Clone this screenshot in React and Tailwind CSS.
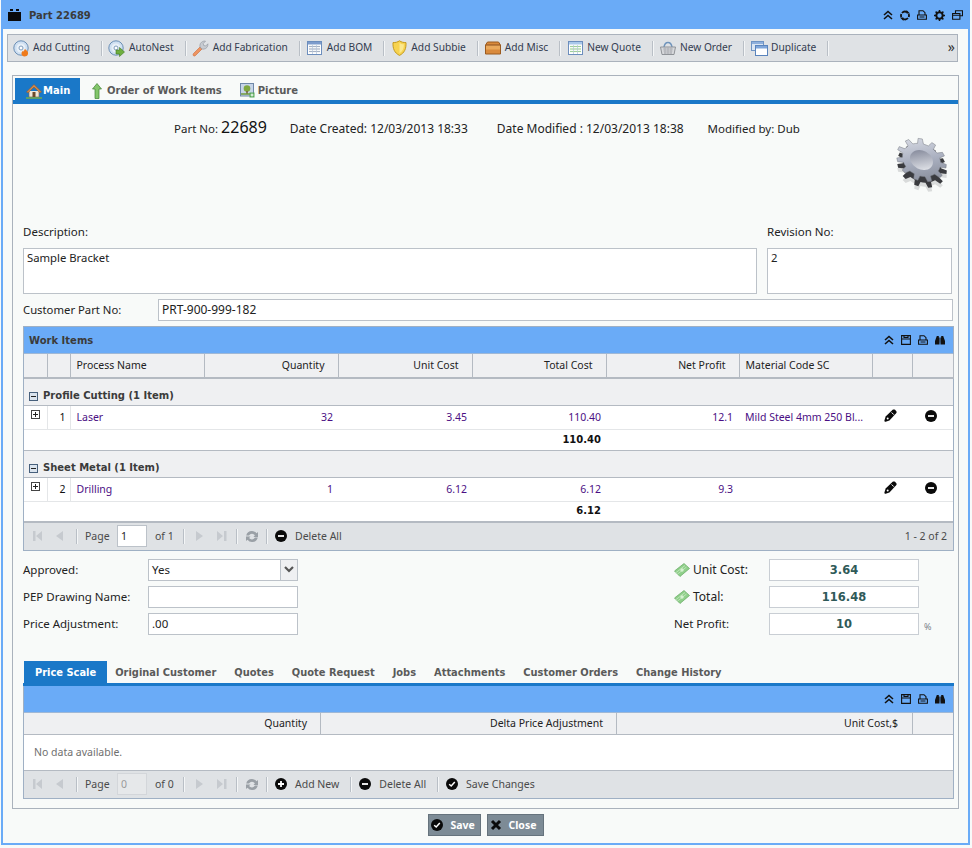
import { Fragment } from 'react'

// small toolbar pictures
const DiscIcon = ({ badge }) => (
  <svg width="17" height="17" viewBox="0 0 17 17" className="shrink-0">
    <circle cx="8" cy="8" r="7.2" fill="#cfe0f2" stroke="#6b8fb5" />
    <circle cx="8" cy="8" r="4.5" fill="#e8f0f8" />
    <circle cx="8" cy="8" r="2" fill="#fff" stroke="#7f9cbc" />
    {badge === 'fire' && <path d="M12 9c2 1.500 3.500 3 3 5-.5 1.800-2 2.500-3.500 2.500S8.500 15.500 8.500 13.500c0-1.500 1-2 1.500-3 .5.500.7 1 1 1.300 0-1 .2-2 1-2.800z" fill="#ef7a1a" />}
    {badge === 'arrow' && <path d="M8 10h3.500V7.500L16.500 12l-5 4.500V14H8z" fill="#6fae3e" stroke="#3f7a22" strokeWidth=".6" />}
  </svg>
)

const WrenchIcon = () => (
  <svg width="17" height="17" viewBox="0 0 17 17" className="shrink-0">
    <path d="M1.500 13.500 8 7l2 2-6.500 6.500c-.7.700-1.500.700-2 .2s-.6-1.400 0-2.200z" fill="#ee9460" stroke="#c9693a" strokeWidth=".6" />
    <path d="M8 7c-.6-2.500.6-5 3.500-5.800.8-.2 1.500-.2 2 0L11.200 3.500l.5 2 2 .5 2.200-2.200c.3 2.800-1.500 5-4 5.300-1 .1-1.500 0-2-.1z" fill="#c8ccd2" stroke="#8a9099" strokeWidth=".6" />
  </svg>
)

const TableIcon = ({ tint }) => (
  <svg width="15" height="14" viewBox="0 0 15 14" className="shrink-0">
    <rect x=".5" y=".5" width="14" height="13" fill="#fff" stroke="#6c8ebd" />
    <rect x="1" y="1" width="13" height="2.500" fill={tint ? '#a9c8ea' : '#7d9ccc'} />
    {[5.500, 8, 10.500].map((y) => <path key={y} d={`M2 ${y}h11`} stroke={tint ? '#9fcf9a' : '#a7b2c4'} strokeWidth="1.200" />)}
    <path d="M5.500 4v9M9.500 4v9" stroke="#b5c4da" strokeWidth=".7" />
  </svg>
)

const ShieldIcon = () => (
  <svg width="15" height="16" viewBox="0 0 15 16" className="shrink-0">
    <path d="M7.500.8C9.500 2.200 11.500 2.600 14 2.600c.3 6-1.500 10.400-6.500 12.800C2.500 13 .7 8.600 1 2.600 3.500 2.600 5.500 2.200 7.500.8z" fill="#f7d34f" stroke="#c49a1e" />
    <path d="M7.500 3c1.300.8 2.600 1.200 4.400 1.300 0 4-1 7-4.400 8.900z" fill="#fbe88f" />
  </svg>
)

const BoxIcon = () => (
  <svg width="16" height="14" viewBox="0 0 16 14" className="shrink-0">
    <path d="M2.500 1h11L15.500 4v9h-15V4z" fill="#d98a3c" stroke="#9a5a1e" />
    <rect x="1" y="4" width="14" height="4.500" fill="#eaa95c" />
    <path d="M1 4h14" stroke="#8a5120" />
  </svg>
)

const BasketIcon = () => (
  <svg width="16" height="14" viewBox="0 0 16 14" className="shrink-0">
    <path d="M4 6c.5-3 2-4.500 4-4.500S11.500 3 12 6" fill="none" stroke="#6e93bb" strokeWidth="1.500" />
    <path d="M.5 6h15l-1.500 7.500H2z" fill="#d7d9dc" stroke="#8f9398" />
    <path d="M3 8h10M3.500 10h9M4 12h8M5 6.500v6.500M8 6.500v6.500M11 6.500v6.500" stroke="#9ca0a5" strokeWidth=".6" />
  </svg>
)

const DuplicateIcon = () => (
  <svg width="17" height="15" viewBox="0 0 17 15" className="shrink-0">
    <rect x=".5" y=".5" width="12" height="9" fill="#dbe6f3" stroke="#6f94c4" />
    <rect x="1" y="1" width="11" height="2" fill="#8fb0dc" />
    <rect x="4.500" y="4.500" width="12" height="10" fill="#fff" stroke="#5a84bd" />
    <rect x="5" y="5" width="11" height="2.500" fill="#7fa6da" />
  </svg>
)

const tools = [
  ['Add Cutting', <DiscIcon badge="fire" />],
  ['AutoNest', <DiscIcon badge="arrow" />],
  ['Add Fabrication', <WrenchIcon />],
  ['Add BOM', <TableIcon />],
  ['Add Subbie', <ShieldIcon />],
  ['Add Misc', <BoxIcon />],
  ['New Quote', <TableIcon tint />],
  ['New Order', <BasketIcon />],
  ['Duplicate', <DuplicateIcon />],
]

// black header glyphs
const ChevronsUp = () => (
  <svg width="10" height="10" viewBox="0 0 10 10"><path d="M1 5l4-3.500L9 5M1 9l4-3.500L9 9" fill="none" stroke="#111" strokeWidth="1.600" /></svg>
)
const RefreshGlyph = () => (
  <svg width="10" height="11" viewBox="0 0 10 11"><path d="M2 3a4 4 0 0 1 5-.8M8 8a4 4 0 0 1-5 .8M1.300 7A4 4 0 0 1 1.300 4M8.700 4a4 4 0 0 1 0 3" fill="none" stroke="#111" strokeWidth="1.800" /><path d="M6.500 0v3.500H10zM3.500 11V7.500H0z" fill="#111" /></svg>
)
const PrintGlyph = () => (
  <svg width="10" height="10" viewBox="0 0 10 10"><path d="M2 5V.7h4l2 2V5M.6 5h8.800v4.300H.6zM2.500 7h5" fill="none" stroke="#111" strokeWidth="1.100" /></svg>
)
const SaveGlyph = () => (
  <svg width="10" height="10" viewBox="0 0 10 10"><path d="M.6.6h8.800v8.800H.6zM.6 4h8.800M3 .6V2.500h4V.6" fill="none" stroke="#111" strokeWidth="1.100" /></svg>
)
const FindGlyph = () => (
  <svg width="10" height="10" viewBox="0 0 10 10" fill="#111"><path d="M1.800 1h2v1.500h.8V7.500H4.500V9.500H0V6zM8.200 1h-2v1.500h-.8V7.500h.1V9.500H10V6z" /></svg>
)
const GearGlyph = () => (
  <svg width="11" height="11" viewBox="0 0 11 11"><circle cx="5.500" cy="5.500" r="3.200" fill="none" stroke="#111" strokeWidth="2" /><path d="M5.500 0v11M0 5.500h11M1.600 1.600l7.800 7.800M9.400 1.600l-7.800 7.800" stroke="#111" strokeWidth="1.500" strokeDasharray="2 7 2" /></svg>
)
const RestoreGlyph = () => (
  <svg width="11" height="10" viewBox="0 0 11 10"><path d="M3.500 3V.8h7v5H8M.6 3.500h7.300v5.700H.6zM.6 5.200h7.300" fill="none" stroke="#111" strokeWidth="1.100" /></svg>
)
const Pencil = () => (
  <svg width="13" height="13" viewBox="0 0 12 12"><path d="M8 .8c.7-.6 1.500-.6 2.200 0l1 1c.6.700.6 1.500 0 2.200L5 10.500 1.500 11.700c-.7.200-1.300-.4-1.100-1.100L1.500 7z" fill="#0a0a0a" /><path d="M7 3.200 9 5.200" stroke="#fff" strokeWidth=".9" /><circle cx="3.400" cy="8.700" r=".9" fill="#fff" /></svg>
)
const RoundIcon = ({ type, size = 12 }) => (
  <svg width={size} height={size} viewBox="0 0 12 12" className="shrink-0">
    <circle cx="6" cy="6" r="6" fill="#0a0a0a" />
    {type === 'minus' && <path d="M3 6h6" stroke="#fff" strokeWidth="1.800" />}
    {type === 'plus' && <path d="M3 6h6M6 3v6" stroke="#fff" strokeWidth="1.800" />}
    {type === 'check' && <path d="M3.200 6.200 5.200 8 8.800 4" fill="none" stroke="#fff" strokeWidth="1.500" />}
  </svg>
)
const ExpandBox = ({ minus }) => (
  <svg width="9" height="9" viewBox="0 0 9 9" className="shrink-0">
    <rect x=".5" y=".5" width="8" height="8" fill={minus ? '#dbe4ee' : '#fff'} stroke={minus ? '#47607c' : '#444'} />
    <path d="M2 4.500h5" stroke="#222" />
    {!minus && <path d="M4.500 2v5" stroke="#222" />}
  </svg>
)
const Money = () => (
  <svg width="16" height="16" viewBox="0 0 16 16" className="shrink-0">
    <path d="M.5 9 10 1.500l5.500 5L6 14.500z" fill="#8fcf8a" stroke="#63a860" strokeWidth=".7" />
    <path d="M1.500 11 11 3.500M3 12.500l9.500-7.500" stroke="#c6e9c2" strokeWidth=".8" />
    <circle cx="8" cy="8" r="1.700" fill="#d5f0d0" />
  </svg>
)

const HouseIcon = () => (
  <svg width="16" height="16" viewBox="0 0 16 16" className="shrink-0">
    <path d="M3 8v6h10V8" fill="#f0e6d8" stroke="#8a6b4d" strokeWidth=".7" />
    <path d="M.5 9 8 1.500 15.500 9l-1.500.8L8 4 2 9.800z" fill="#d98b4a" stroke="#9d5a26" strokeWidth=".6" />
    <rect x="6.500" y="9" width="3" height="5" fill="#6d4a2b" />
    <path d="M0 15h16" stroke="#72ab4a" strokeWidth="1.500" />
  </svg>
)
const UpArrow = () => (
  <svg width="10" height="16" viewBox="0 0 10 16" className="shrink-0"><path d="M5 .5 9.500 6H7v9.500H3V6H.5z" fill="#83c66b" stroke="#3f8234" strokeWidth=".7" /></svg>
)
const PictureIcon = () => (
  <svg width="15" height="15" viewBox="0 0 15 15" className="shrink-0">
    <rect x=".5" y=".5" width="13" height="12.500" fill="#c7d5e8" stroke="#6f88a8" />
    <circle cx="7" cy="5.500" r="3.300" fill="#7fa83f" />
    <rect x="6.300" y="8" width="1.400" height="3" fill="#6d5232" />
    <path d="M1 11h12" stroke="#6f9a3c" strokeWidth="1.500" />
    <rect x="9.500" y="9.500" width="5" height="5" fill="#5aa85a" />
    <path d="M12 10.500v3M10.500 12h3" stroke="#fff" />
  </svg>
)

// large cog on the top right of the form
const gearPath = () => {
  const pts = []
  const teeth = 11
  for (let i = 0; i < teeth; i++) {
    const a = (i / teeth) * Math.PI * 2
    const step = (Math.PI * 2) / teeth
    ;[[0, 20], [0.2, 20], [0.32, 26], [0.62, 26], [0.74, 20]].forEach(([o, r]) => {
      const t = a + o * step
      pts.push(`${(Math.cos(t) * r).toFixed(2)},${(Math.sin(t) * r).toFixed(2)}`)
    })
  }
  return pts.join(' ')
}

const BigGear = () => {
  const g = gearPath()
  return (
    <svg width="56" height="60" viewBox="0 0 56 60">
      <defs>
        <linearGradient id="cogTop" x1="0" y1="0" x2="1" y2="1">
          <stop offset="0" stopColor="#e4e6ee" />
          <stop offset="0.5" stopColor="#aab0c0" />
          <stop offset="1" stopColor="#7b808c" />
        </linearGradient>
        <linearGradient id="cogHole" x1="0" y1="0" x2="1" y2="1">
          <stop offset="0" stopColor="#787d90" />
          <stop offset="1" stopColor="#eef0f4" />
        </linearGradient>
      </defs>
      <g transform="translate(28 36) rotate(28) scale(1 .78)"><polygon points={g} fill="#d9dbdb" /></g>
      <g transform="translate(28 32) rotate(28) scale(1 .78)">
        <polygon points={g} fill="#3a3b3f" />
      </g>
      <g transform="translate(27.500 26) rotate(28) scale(1 .78)">
        <polygon points={g} fill="url(#cogTop)" stroke="#74777f" strokeWidth=".5" />
        <circle r="12" fill="url(#cogHole)" />
      </g>
    </svg>
  )
}

const Sep = () => <span className="w-[2px] h-[15px] bg-[#f4f6f7] border-l border-[#b9bfc6] shrink-0" />

const PagerArrow = ({ d }) => (
  <svg width="11" height="12" viewBox="0 0 11 12" className="shrink-0"><path d={d} fill="#c6cacf" /></svg>
)
const SyncGray = () => (
  <svg width="14" height="13" viewBox="0 0 14 13" className="shrink-0"><path d="M7 1a5.500 5.500 0 0 1 4.500 2.300L13 2v5H8.500l1.400-1.700A3.500 3.500 0 0 0 4 5.500H1.200A5.800 5.800 0 0 1 7 1zM7 12a5.500 5.500 0 0 1-4.500-2.300L1 11V6.500h4.500L4.100 8A3.500 3.500 0 0 0 10 7.500h2.800A5.800 5.800 0 0 1 7 12z" fill="#9aa0a6" /></svg>
)

const Pager = ({ value, total, actions, right, disabled }) => (
  <div className="flex items-center h-[28px] bg-[#dfe2e5] border-t border-[#b4bac2] pl-[8px] pr-[6px] text-[#4a4a4a]">
    <PagerArrow d="M1 1h2.500v10H1zM10 1v10L4 6z" />
    <span className="w-[11px]" />
    <PagerArrow d="M9 1v10L2 6z" />
    <span className="w-[11px]" />
    <Sep />
    <span className="ml-[7px] w-[25px]">Page</span>
    {disabled ? (
      <span className="ml-[7px] w-[30px] h-[22px] border border-[#d3d6da] bg-[#e6e8ea] text-[#9a9a9a] flex items-center pl-[3px]">{value}</span>
    ) : (
      <span className="ml-[7px] w-[30px] h-[22px] border border-[#bcc2c9] bg-white text-[#222] flex items-center pl-[3px]">{value}</span>
    )}
    <span className="ml-[8px] w-[20px]">of {total}</span>
    <span className="w-[8px]" />
    <Sep />
    <span className="w-[9px]" />
    <PagerArrow d="M2 1v10l7-5z" />
    <span className="w-[11px]" />
    <PagerArrow d="M1 1v10l6-5zM8 1h2.500v10H8z" />
    <span className="w-[9px]" />
    <Sep />
    <span className="w-[7px]" />
    <SyncGray />
    <span className="w-[7px]" />
    <Sep />
    {actions.map(([label, type], i) => (
      <Fragment key={label}>
        {i > 0 && <Sep />}
        <span className="flex items-center ml-[7px] mr-[11px]">
          <RoundIcon type={type} />
          <span className="ml-[8px]">{label}</span>
        </span>
      </Fragment>
    ))}
    <span className="ml-auto">{right}</span>
  </div>
)

const GridBar = ({ title }) => (
  <div className="flex items-center justify-between h-[27px] bg-[#6aabf7] pl-[5px] pr-[8px] border-b border-[#9fb8d6]">
    <span className="pt-[1px] font-['DejaVu_Sans'] text-[10px] font-bold text-[#3b3b3b]">{title}</span>
    <span className="flex items-center gap-[7px]"><ChevronsUp /><SaveGlyph /><PrintGlyph /><FindGlyph /></span>
  </div>
)

const workCols = [23, 23, 134, 134, 134, 134, 133, 133, 40, 41]

const Th = ({ children, right }) => (
  <th className={`h-[24px] pb-[1px] font-normal text-[#222] border-r border-[#b4bac2] bg-[#eff0f2] ${right ? 'text-right pr-[13px]' : 'text-left pl-[6px]'}`}>{children}</th>
)

const WorkGroup = ({ title, no, name, qty, unit, total, net, material, totalRow }) => (
  <>
    <tr className="bg-[#eff0f2]">
      <td colSpan={10} className="h-[27px] border-b border-[#b4bac2] pt-[9px] pl-[5px]">
        <span className="flex items-center gap-[5px] font-['DejaVu_Sans'] text-[10px] font-bold text-[#3b3b3b]"><ExpandBox minus />{title}</span>
      </td>
    </tr>
    <tr className="bg-white text-[#4b0f84]">
      <td className="h-[24px] border-b border-r border-[#e4e6e8] pl-[7px] align-top pt-[4px]"><ExpandBox /></td>
      <td className="border-b border-r border-[#e4e6e8] text-right pr-[4px] text-[#111]">{no}</td>
      <td className="border-b border-[#e4e6e8] pl-[6px]">{name}</td>
      <td className="border-b border-[#e4e6e8] text-right pr-[5px]">{qty}</td>
      <td className="border-b border-[#e4e6e8] text-right pr-[5px]">{unit}</td>
      <td className="border-b border-[#e4e6e8] text-right pr-[5px]">{total}</td>
      <td className="border-b border-[#e4e6e8] text-right pr-[6px]">{net}</td>
      <td className="border-b border-[#e4e6e8] pl-[6px] whitespace-nowrap">{material}</td>
      <td className="border-b border-[#e4e6e8] pl-[12px] align-top pt-[3px]"><Pencil /></td>
      <td className="border-b border-[#e4e6e8] pl-[13px] align-top pt-[4px]"><RoundIcon type="minus" /></td>
    </tr>
    <tr className="bg-white">
      <td colSpan={5} className={`${totalRow} border-b border-[#b4bac2]`} />
      <td className="border-b border-[#b4bac2] text-right pr-[5px] font-['DejaVu_Sans'] text-[10px] font-bold text-[#111]">{total}</td>
      <td colSpan={4} className="border-b border-[#b4bac2]" />
    </tr>
  </>
)

const CostField = ({ children }) => (
  <div className="w-[150px] h-[22px] pt-[2px] bg-white border border-[#c9ced4] flex items-center justify-center font-['DejaVu_Sans'] font-bold text-[#2f5a58] text-[11.5px]">{children}</div>
)

const FormInput = ({ children, className = '' }) => (
  <div className={`h-[22px] bg-white border border-[#bcc2c9] flex items-center pl-[3px] text-[#222] ${className}`}>{children}</div>
)

const App = () => {
  return (
    <div className="w-[972px] h-[848px] bg-[#f8faf9] font-['Noto_Sans'] text-[10.5px] leading-none overflow-hidden">
      <div className="mx-[1px] h-[845px] border-2 border-t-[1px] border-[#6aabf7] w-[969px] flex flex-col">
        {/* Title bar */}
        <div className="flex items-center justify-between h-[28px] shrink-0 bg-[#6aabf7] pl-[5px] pr-[5px]">
          <span className="flex items-center gap-[8px] font-['DejaVu_Sans'] font-bold text-[#3b3b3b] text-[10px]">
            <svg width="13" height="12" viewBox="0 0 13 12"><path d="M2 0h3v2H2zM8 0h3v2H8zM0 3h13v9H0z" fill="#0a0a0a" /></svg>
            <span className="pt-[1px]">Part 22689</span>
          </span>
          <span className="flex items-center gap-[7px]"><ChevronsUp /><RefreshGlyph /><PrintGlyph /><GearGlyph /><RestoreGlyph /></span>
        </div>

        {/* Toolbar */}
        <div className="ml-[4px] mt-[5px] w-[951px] h-[28px] shrink-0 flex items-center bg-[#dfe2e5] border border-[#aab2bc] pl-[5px] pr-[2px] text-[#333c50] text-[10.2px]">
          {tools.map(([label, icon]) => (
            <Fragment key={label}>
              <span className="flex items-center gap-[4px] mr-[11px]">
                <span className="w-[16px] flex justify-center">{icon}</span>
                <span className="whitespace-nowrap pb-[1px]">{label}</span>
              </span>
              <Sep />
              <span className="w-[6px]" />
            </Fragment>
          ))}
          <span className="ml-auto pb-[2px] text-[#333] text-[14px]">»</span>
        </div>

        {/* Main panel */}
        <div className="ml-[9px] mt-[13px] w-[947px] h-[734px] shrink-0 border border-[#aab2bc] flex flex-col">
          <div className="flex items-end h-[22px] pl-[2px] mt-[2px] shrink-0 font-['DejaVu_Sans'] text-[10px] font-bold text-[#5a5a5a]">
            <span className="flex items-center gap-[1px] h-[22px] w-[65px] pl-[11px] pt-[3px] bg-[#1a78c8] text-white"><HouseIcon />Main</span>
            <span className="flex items-center gap-[5px] h-[22px] pt-[3px] ml-[12px]"><UpArrow />Order of Work Items</span>
            <span className="flex items-center gap-[3px] h-[22px] pt-[3px] ml-[18px]"><PictureIcon />Picture</span>
          </div>
          <div className="h-[4px] shrink-0 bg-[#1a78c8]" />

          <div className="relative flex items-baseline h-[45px] pt-[15px] pl-[161px] text-[#222] shrink-0 text-[11.5px]">
            <span>Part No: <span className="text-[16px] text-[#111]">22689</span></span>
            <span className="ml-[23px] text-[12px]">Date Created: 12/03/2013 18:33</span>
            <span className="ml-[29px] text-[12px]">Date Modified : 12/03/2013 18:38</span>
            <span className="ml-[24px]">Modified by: Dub</span>
            <span className="absolute right-[8px] top-[30px]"><BigGear /></span>
          </div>

          <div className="flex justify-between pl-[10px] pr-[6px] mt-[77px] h-[22px] shrink-0 text-[#222] text-[11.5px]">
            <span>Description:</span>
            <span className="w-[185px]">Revision No:</span>
          </div>
          <div className="flex justify-between pl-[10px] pr-[6px] shrink-0 text-[#222] text-[11.3px]">
            <div className="w-[734px] h-[46px] bg-white border border-[#bcc2c9] pl-[3px] pt-[3px]">Sample Bracket</div>
            <div className="w-[185px] h-[46px] bg-white border border-[#bcc2c9] pl-[3px] pt-[3px]">2</div>
          </div>
          <div className="flex items-center pl-[10px] pr-[5px] mt-[5px] shrink-0 text-[#222] text-[11.3px]">
            <span className="w-[135px]">Customer Part No:</span>
            <FormInput className="flex-1 text-[12px]">PRT-900-999-182</FormInput>
          </div>

          {/* Work items */}
          <div className="ml-[10px] mr-[4px] mt-[5px] border border-[#9fb0c4] shrink-0">
            <GridBar title="Work Items" />
            <table className="w-full table-fixed border-collapse">
              <colgroup>{workCols.map((w, i) => <col key={i} style={{ width: w }} />)}</colgroup>
              <thead>
                <tr className="border-b-2 border-[#b4bac2]">
                  <Th />
                  <Th />
                  <Th>Process Name</Th>
                  <Th right>Quantity</Th>
                  <Th right>Unit Cost</Th>
                  <Th right>Total Cost</Th>
                  <Th right>Net Profit</Th>
                  <Th>Material Code SC</Th>
                  <Th />
                  <Th />
                </tr>
              </thead>
              <tbody>
                <WorkGroup title="Profile Cutting (1 Item)" no="1" name="Laser" qty="32" unit="3.45" total="110.40" net="12.1" material="Mild Steel 4mm 250 Bl..." totalRow="h-[21px]" />
                <WorkGroup title="Sheet Metal (1 Item)" no="2" name="Drilling" qty="1" unit="6.12" total="6.12" net="9.3" material="" totalRow="h-[20px]" />
              </tbody>
            </table>
            <Pager value="1" total="1" actions={[['Delete All', 'minus']]} right="1 - 2 of 2" />
          </div>

          {/* Approval and totals */}
          <div className="flex justify-between pl-[10px] pr-[39px] mt-[8px] shrink-0 text-[#222] text-[11.5px]">
            <div className="flex flex-col gap-[5px]">
              <div className="flex items-center">
                <span className="w-[125px]">Approved:</span>
                <FormInput className="w-[150px] relative">
                  Yes
                  <span className="absolute right-0 top-0 bottom-0 w-[17px] bg-[#eff0f2] border-l border-[#bcc2c9] flex items-center justify-center">
                    <svg width="10" height="7" viewBox="0 0 10 7"><path d="M1 1l4 4 4-4" fill="none" stroke="#555" strokeWidth="2.200" /></svg>
                  </span>
                </FormInput>
              </div>
              <div className="flex items-center">
                <span className="w-[125px]">PEP Drawing Name:</span>
                <FormInput className="w-[150px]" />
              </div>
              <div className="flex items-center">
                <span className="w-[125px]">Price Adjustment:</span>
                <FormInput className="w-[150px]">.00</FormInput>
              </div>
            </div>
            <div className="flex flex-col gap-[5px]">
              <div className="flex items-center">
                <span className="w-[95px] flex items-center gap-[3px] text-[12px]"><Money />Unit Cost:</span>
                <CostField>3.64</CostField>
              </div>
              <div className="flex items-center">
                <span className="w-[95px] flex items-center gap-[3px] text-[12px]"><Money />Total:</span>
                <CostField>116.48</CostField>
              </div>
              <div className="flex items-center relative">
                <span className="w-[95px]">Net Profit:</span>
                <CostField>10</CostField>
                <span className="absolute left-[250px] top-[9px] text-[9px] text-[#78828a]">%</span>
              </div>
            </div>
          </div>

          {/* Lower tabs */}
          <div className="flex items-end h-[22px] ml-[11px] mt-[26px] shrink-0 font-['DejaVu_Sans'] text-[9.9px] font-bold text-[#5a5a5a] gap-[18px]">
            <span className="h-[22px] flex items-center pt-[2px] px-[11px] bg-[#1a78c8] text-white -mr-[10px]">Price Scale</span>
            {['Original Customer', 'Quotes', 'Quote Request', 'Jobs', 'Attachments', 'Customer Orders', 'Change History'].map((t) => (
              <span key={t} className="h-[22px] pt-[2px] flex items-center">{t}</span>
            ))}
          </div>
          <div className="ml-[10px] mr-[4px] shrink-0 border-t-[3px] border-[#1a78c8]">
            <div className="border border-t-0 border-[#9fb0c4]">
              <GridBar title="" />
              <div className="grid grid-cols-[297px_296px_296px_40px] h-[22px] bg-[#eff0f2] items-center border-b border-[#b4bac2] text-[#222]">
                <span className="pr-[13px] h-full flex items-center justify-end border-r border-[#b4bac2]">Quantity</span>
                <span className="pr-[13px] h-full flex items-center justify-end border-r border-[#b4bac2]">Delta Price Adjustment</span>
                <span className="pr-[14px] h-full flex items-center justify-end border-r border-[#b4bac2]">Unit Cost,$</span>
                <span />
              </div>
              <div className="h-[35px] bg-white flex items-center pl-[10px] text-[#6f6f6f]">No data available.</div>
              <Pager value="0" total="0" disabled actions={[['Add New', 'plus'], ['Delete All', 'minus'], ['Save Changes', 'check']]} />
            </div>
          </div>
        </div>

        {/* Footer buttons */}
        <div className="flex justify-center gap-[6px] mt-[5px] shrink-0 font-bold text-white">
          <button className="w-[53px] h-[22px] bg-[#7d8b96] border border-[#66737d] flex items-center pl-[2px] gap-[8px]"><RoundIcon type="check" />Save</button>
          <button className="w-[57px] h-[22px] bg-[#7d8b96] border border-[#66737d] flex items-center pl-[2px] gap-[7px]">
            <svg width="12" height="12" viewBox="0 0 12 12"><path d="M2 2l8 8M10 2l-8 8" stroke="#0a0a0a" strokeWidth="3" /></svg>
            Close
          </button>
        </div>
      </div>
    </div>
  )
}

export default App
